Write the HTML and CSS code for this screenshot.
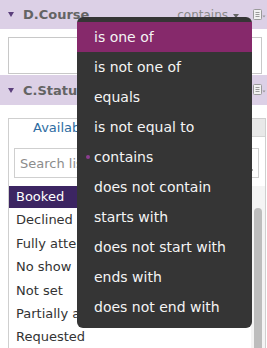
FILE: index.html
```html
<!DOCTYPE html>
<html>
<head>
    <title>Filters</title>
    <link rel="stylesheet" href="styles.css">
</head>
<body>
    <div class="filter">
        <div class="filter-head first">
            <span class="caret"></span>
            <span class="filter-title">D.Course</span>
            <span class="operator">contains <span class="op-arrow"></span></span>
            <svg class="menu-icon" width="13" height="12" viewBox="0 0 13 12">
                <rect x="0.5" y="0.5" width="8" height="10" rx="1" fill="#f2f2f2" stroke="#9a9a9a"/>
                <path d="M2.5 3.5h4M2.5 5.5h4M2.5 7.5h4" stroke="#9a9a9a"/>
                <path d="M9.5 6.5h3l-1.5 2z" fill="#9a9a9a"/>
            </svg>
        </div>
        <div class="filter-body">
            <input class="text-input" type="text">
        </div>
    </div>

    <div class="filter">
        <div class="filter-head">
            <span class="caret"></span>
            <span class="filter-title">C.Status</span>
            <svg class="menu-icon" width="13" height="12" viewBox="0 0 13 12">
                <rect x="0.5" y="0.5" width="8" height="10" rx="1" fill="#f2f2f2" stroke="#9a9a9a"/>
                <path d="M2.5 3.5h4M2.5 5.5h4M2.5 7.5h4" stroke="#9a9a9a"/>
                <path d="M9.5 6.5h3l-1.5 2z" fill="#9a9a9a"/>
            </svg>
        </div>
        <div class="list-panel">
            <div class="tabs">
                <span class="tab active">Available</span>
                <span class="tab"></span>
            </div>
            <div class="search">
                <input class="search-input" type="text" placeholder="Search list">
                <span class="search-dot"></span>
            </div>
            <div class="list-wrap">
                <ul class="list">
                    <li class="selected">Booked</li>
                    <li>Declined</li>
                    <li>Fully attended</li>
                    <li>No show</li>
                    <li>Not set</li>
                    <li>Partially attended</li>
                    <li>Requested</li>
                </ul>
                <div class="scrollbar"><div class="thumb"></div></div>
            </div>
        </div>
    </div>

    <ul class="op-menu">
        <li class="hover">is one of</li>
        <li>is not one of</li>
        <li>equals</li>
        <li>is not equal to</li>
        <li class="current">contains</li>
        <li>does not contain</li>
        <li>starts with</li>
        <li>does not start with</li>
        <li>ends with</li>
        <li>does not end with</li>
    </ul>
</body>
</html>
```

FILE: styles.css
```css
body {
    margin: 0;
    width: 267px;
    height: 348px;
    overflow: hidden;
    position: relative;
    font-family: "DejaVu Sans", Verdana, sans-serif;
    font-size: 13px;
    color: #333;
    background: #fff;
}
.filter-head {
    display: flex;
    align-items: center;
    height: 30px;
    padding: 0 1px 0 8px;
    background-color: #dcd0e6;
}
.filter-head.first {
    height: 29px;
}
.caret {
    width: 0;
    height: 0;
    border-left: 3px solid transparent;
    border-right: 3px solid transparent;
    border-top: 5px solid #5b3f7c;
    margin-right: 9px;
}
.filter-title {
    flex: 1;
    font-weight: bold;
    font-size: 13px;
    color: #646464;
}
.operator {
    font-size: 12px;
    color: #8a8a8a;
    margin-right: 14px;
    display: flex;
    align-items: center;
}
.op-arrow {
    width: 0;
    height: 0;
    margin-left: 5px;
    margin-top: 2px;
    border-left: 3px solid transparent;
    border-right: 3px solid transparent;
    border-top: 4px solid #666;
}
.menu-icon {
    display: block;
}
.filter-body {
    padding: 8px 5px 1px 8px;
}
.text-input {
    display: block;
    box-sizing: border-box;
    width: 254px;
    height: 37px;
    margin: 0;
    border: 1px solid #c8c8c8;
    background: #fff;
}
.list-panel {
    margin: 13px 1px 0 8px;
    border: 1px solid #cfcfcf;
    border-bottom: none;
}
.tabs {
    display: flex;
    height: 18px;
    line-height: 18px;
}
.tab {
    flex: 1;
    background: #e8e8e8;
    border-left: 1px solid #d4d4d4;
    border-bottom: 1px solid #d4d4d4;
}
.tab.active {
    flex: 0 0 104px;
    background: #fff;
    border: none;
    color: #2d6ca2;
    padding-left: 24px;
}
.search {
    position: relative;
    margin: 11px 6px 0 5px;
}
.search-input {
    display: block;
    box-sizing: border-box;
    width: 100%;
    height: 30px;
    margin: 0;
    padding: 0 5px;
    border: 1px solid #cfcfcf;
    font-family: "DejaVu Sans", Verdana, sans-serif;
    font-size: 13px;
}
.search-input::placeholder {
    color: #8c8c8c;
}
.search-dot {
    position: absolute;
    right: 6px;
    bottom: 7px;
    width: 2px;
    height: 2px;
    background: #aaa;
}
.list-wrap {
    display: flex;
    margin-top: 8px;
    height: 162px;
}
.list {
    flex: 1;
    list-style: none;
    margin: 0;
    padding: 0;
}
.list li {
    height: 23.4px;
    line-height: 22px;
    padding-left: 7px;
    white-space: nowrap;
    overflow: hidden;
}
.list li.selected {
    height: 22px;
    margin-bottom: 1.4px;
    background-color: #3c2562;
    color: #fff;
}
.scrollbar {
    width: 14px;
    background: #f4f4f4;
    padding-top: 22px;
    box-sizing: border-box;
}
.thumb {
    width: 8px;
    height: 150px;
    margin-left: 3px;
    background: #bdbdbd;
    border-radius: 4px;
}
.op-menu {
    position: absolute;
    left: 77px;
    top: 17px;
    width: 175px;
    height: 311px;
    box-sizing: border-box;
    margin: 0;
    padding: 5px 0 6px;
    list-style: none;
    background-color: #353535;
    border-radius: 6px;
}
.op-menu li {
    position: relative;
    height: 30px;
    line-height: 30px;
    padding-left: 17px;
    font-size: 14px;
    color: #f4f4f4;
    white-space: nowrap;
}
.op-menu li.hover {
    background-color: #86296b;
}
.op-menu li.current::before {
    content: "";
    position: absolute;
    left: 9px;
    top: 13px;
    width: 4px;
    height: 4px;
    border-radius: 50%;
    background: #8b3d8f;
}
```
